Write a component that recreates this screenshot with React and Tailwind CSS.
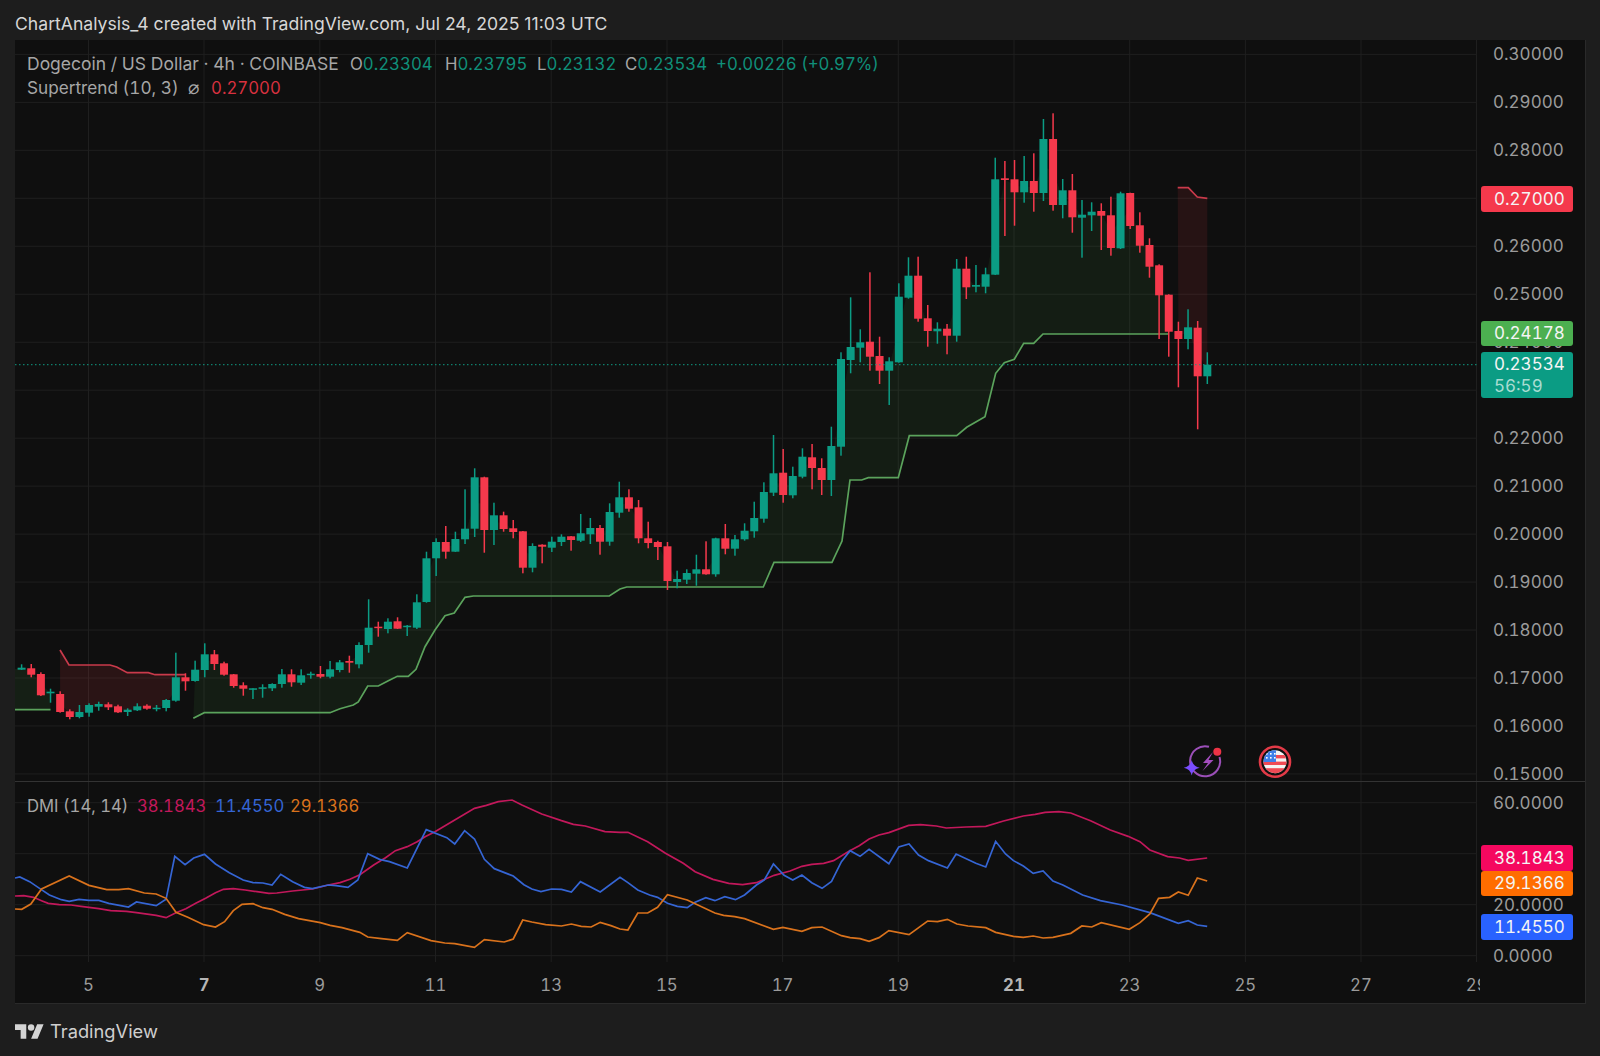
import React from 'react';

// candle rows: wick top, body top, body bottom, wick bottom, 1 = up / 0 = down
const candles = [
  [664.3, 667.7, 669.7, 670, 1], [664, 668.3, 674.7, 677.3, 0], [672.3, 674, 695.3, 696, 0], [688.7, 691.7, 693.3, 702.7, 1],
  [691.3, 694, 712, 712.7, 0], [709.3, 711.3, 717, 719.3, 0], [705, 712, 717, 718.3, 1], [703.3, 705, 712.7, 716.7, 1],
  [701.7, 704, 706.7, 710.7, 1], [702.3, 704.3, 707.3, 710, 0], [704.7, 706.3, 712.3, 713, 0], [708.3, 709.7, 712, 716, 1],
  [703.3, 706.3, 710.3, 711, 1], [704.3, 705.7, 708.7, 709.7, 0], [705, 707.7, 708.7, 711.3, 1], [699, 700, 708, 711.3, 1],
  [652.7, 677.3, 700.7, 701.7, 1], [673.3, 677.3, 681.3, 690.7, 0], [660.7, 669.7, 681, 681.7, 1], [643.3, 654.3, 670, 677.3, 1],
  [650, 654.3, 664, 670, 0], [661.7, 663.3, 674.7, 675.7, 0], [674, 674.3, 686, 687.7, 0], [682.3, 685.3, 688.7, 695.7, 0],
  [688.3, 688.3, 689, 699, 1], [684.3, 687.3, 688.3, 697.7, 1], [683.3, 684, 688.3, 691, 1], [669, 674.3, 684, 687.7, 1],
  [669.3, 674.3, 682.3, 686.7, 0], [669.3, 675.3, 682.7, 685, 1], [671.7, 673.7, 675, 678.7, 1], [666, 674, 676.7, 678.3, 0],
  [661, 669.3, 676.7, 678.3, 1], [660, 662.3, 670, 672.3, 1], [655.7, 661, 662.7, 672.7, 0], [642.3, 645, 664.3, 668.3, 1],
  [599.3, 627.7, 645, 652.7, 1], [621.7, 626.7, 628, 636.7, 0], [618.3, 621.7, 629, 633.3, 1], [617.3, 621.3, 628.7, 629, 0],
  [625, 625.7, 626.7, 636, 1], [594.3, 602.3, 627.7, 629, 1], [551.7, 558.3, 602, 602.7, 1], [538.3, 542, 558.3, 576, 1],
  [526, 542, 551.7, 558.7, 0], [531.7, 539, 551.7, 552, 1], [489.3, 528.7, 539.3, 544, 1], [468.3, 477.3, 528.7, 537, 1],
  [476.7, 477.3, 530, 552.7, 0], [502.7, 515.3, 530, 545, 1], [511.7, 515.3, 529, 531.7, 0], [520, 528.3, 532, 538.3, 0],
  [531, 531.3, 567.7, 573.3, 0], [543.3, 546, 567.7, 572.3, 1], [544.3, 544.7, 546.7, 563.3, 0], [536.7, 541.7, 547.7, 552, 1],
  [534.3, 536.7, 542, 546, 1], [536, 536.3, 540, 550.7, 0], [514, 533.3, 540.7, 542, 1], [518, 528, 534.3, 544, 1],
  [525, 528, 541.7, 554.7, 0], [503.3, 512, 541.7, 545.7, 1], [481.7, 497.3, 512.7, 517.7, 1], [489.3, 497.3, 508.7, 511.7, 0],
  [500, 507.3, 538.3, 543.3, 0], [521.7, 538.3, 543, 548.3, 0], [540.7, 542, 547, 560, 0], [542, 546.3, 581, 590, 0],
  [570.7, 579, 582, 588.3, 1], [569.3, 573, 579.7, 584, 1], [554.7, 569.3, 573.7, 585.7, 1], [541.3, 569.3, 574.3, 574.7, 0],
  [537.7, 538.3, 574.3, 576.7, 1], [524, 538.3, 548.7, 554.3, 0], [535, 539.3, 548.7, 555.7, 1], [523.3, 530.7, 539.3, 540.7, 1],
  [501.7, 518, 531.3, 537.7, 1], [482.3, 492, 518.7, 522.7, 1], [435, 473.3, 492.7, 496, 1], [449, 472.7, 495, 502.7, 0],
  [466.7, 476, 495.3, 498.3, 1], [448.3, 456.7, 476.7, 478.3, 1], [444, 457.3, 468, 489.3, 0], [458.3, 468, 480, 495, 0],
  [426.7, 446, 480, 496, 1], [352.3, 359, 446.7, 455.7, 1], [297.3, 347, 360, 373.3, 1], [329.3, 342.3, 347.7, 362.3, 1],
  [272.3, 341.7, 356.7, 370.7, 0], [336.7, 356, 370.7, 384, 0], [357.3, 361.3, 370.7, 405, 1], [283.3, 296.7, 362.3, 362.7, 1],
  [257.3, 275.7, 297.7, 298.7, 1], [256.7, 275.7, 318.7, 321.7, 0], [305, 318.3, 331, 346.7, 0], [322.3, 328.7, 331.3, 343.7, 1],
  [324, 328.7, 335.7, 354.3, 0], [259, 268.7, 335.7, 341.7, 1], [256.7, 268.7, 287.3, 299, 0], [265, 285, 286.7, 292.3, 1],
  [267.7, 274.3, 286.7, 293.3, 1], [157.7, 179.3, 274.7, 275, 1], [161, 178.3, 180, 236, 0], [160, 179.3, 192.3, 225.7, 0],
  [156, 181, 192.3, 202.7, 1], [153.3, 181, 193, 211.7, 0], [119, 139, 193, 201, 1], [113.3, 139, 205, 210.7, 0],
  [179, 190.3, 205, 218.3, 1], [174, 190.3, 217.3, 232.7, 0], [200, 214.7, 217.7, 257.7, 1], [202.3, 211.7, 215.3, 231, 1],
  [203.3, 211, 215.7, 250, 0], [196.7, 215.3, 248, 255.7, 0], [191.7, 193.3, 248.3, 249, 1], [192.7, 193, 226, 229, 0],
  [212.3, 225.3, 245.7, 252.7, 0], [238.3, 245, 266.7, 277.7, 0], [264.3, 265.3, 295.3, 339, 0], [294.3, 294.7, 331.7, 356.7, 0],
  [321.7, 331, 339, 387.3, 0], [309.3, 327.3, 339, 349.3, 1], [321, 327.7, 376.3, 429.3, 0], [352.3, 364.7, 376.3, 384, 1],
];

const candleX = (i) => 21.6 + i * 9.64;

// supertrend runs, with the candle range each one shades
const greenA = [[15, 709.7], [50.5, 709.7]];
const greenB = [
  [193.3, 718.3], [204.3, 712.7], [330, 712.7], [340, 708.7], [353.3, 705], [358.3, 702], [367.7, 686], [378.3, 686],
  [388.3, 680.7], [397.3, 676.3], [408.3, 676.3], [416, 669.3], [425, 646.7], [435, 630], [445, 615.7], [454.3, 613],
  [465, 597.3], [473.3, 596], [609.3, 596], [620, 589], [626.7, 587], [763.3, 587], [774, 562.3], [832, 562.3],
  [842, 541], [850, 480], [861.7, 480], [868.3, 477.7], [898.3, 477.7], [909.3, 435.7], [956.7, 435.7], [966.7, 427.3],
  [985, 416.7], [995.7, 373.3], [1004.3, 362.7], [1014.3, 359.3], [1023.7, 343.3], [1033.7, 343.3], [1043, 334], [1168.3, 334],
];
const redA = [[60, 650], [69, 665], [110, 665], [116.7, 667], [127.3, 672.7], [148.3, 672.7], [155, 674.7], [185.5, 674.7]];
const redB = [[1177.7, 187.7], [1188.3, 187.7], [1197.3, 197], [1207.3, 198.3]];

const toPoints = (pts) => pts.map((p) => p.join(',')).join(' ');

const shade = (line, from, to) => {
  const mids = [];
  for (let i = to; i >= from; i--) mids.push([candleX(i), (candles[i][1] + candles[i][2]) / 2]);
  return toPoints([...line, ...mids]);
};

// DMI lines, two stretches of the pane joined at x = 620
const dmiPts = (left, right) => [
  ...left.map(([x, y]) => [x / 2.529, 790 + y / 3]),
  ...right.map(([x, y]) => [620 + x / 2.529, 790 + y / 3]),
];

const pinkLine = dmiPts(
  [[38,318],[60,317],[85,322],[105,332],[122,340],[150,344],[180,345],[205,349],[250,356],[280,362],[320,364],[345,368],[395,376],[420,383],[445,368],[470,356],[495,340],[520,325],[545,308],[565,298],[590,296],[620,300],[650,305],[680,310],[700,309],[740,303],[790,297],[830,285],[860,278],[885,268],[910,254],[945,225],[975,203],[1000,182],[1030,170],[1055,155],[1075,140],[1100,125],[1150,90],[1200,55],[1230,46],[1260,35],[1295,30],[1320,45],[1370,72],[1420,92],[1450,103],[1480,108],[1530,125],[1568,127]],
  [[20,127],[70,155],[115,190],[160,220],[190,245],[235,268],[275,280],[310,284],[345,278],[390,256],[430,243],[460,229],[485,223],[515,220],[540,212],[580,183],[605,167],[630,147],[655,135],[680,128],[730,106],[760,104],[800,108],[825,114],[875,111],[925,109],[970,93],[1020,78],[1050,73],[1075,67],[1110,65],[1140,69],[1190,92],[1240,120],[1285,139],[1315,155],[1340,180],[1385,200],[1415,204],[1437,211],[1485,204]]
);
const blueLine = dmiPts(
  [[38,264],[50,261],[75,275],[100,295],[125,315],[155,329],[175,334],[200,328],[225,331],[250,331],[275,340],[325,351],[345,336],[395,347],[420,328],[442,199],[468,224],[490,204],[517,193],[545,222],[580,248],[615,270],[640,278],[665,279],[688,285],[710,253],[740,275],[770,292],[790,296],[830,285],[850,287],[880,292],[905,270],[930,191],[960,208],[985,215],[1030,234],[1078,119],[1130,143],[1150,162],[1175,122],[1200,147],[1225,208],[1250,236],[1298,258],[1325,284],[1345,297],[1368,305],[1395,297],[1420,298],[1445,306],[1468,275],[1518,306],[1568,262]],
  [[20,278],[45,300],[75,315],[95,322],[120,340],[145,349],[170,353],[190,337],[217,323],[240,332],[265,320],[292,329],[315,315],[345,285],[365,270],[388,222],[415,256],[437,270],[460,255],[485,278],[511,295],[535,274],[560,215],[582,182],[607,199],[630,178],[680,221],[705,171],[731,162],[755,195],[780,212],[828,234],[850,192],[900,220],[925,231],[950,154],[975,192],[995,212],[1020,228],[1045,250],[1070,243],[1095,273],[1120,285],[1170,315],[1215,332],[1270,345],[1340,368],[1412,400],[1437,392],[1460,405],[1485,409]]
);
const orangeLine = dmiPts(
  [[38,357],[55,358],[78,342],[105,297],[175,258],[225,286],[270,299],[300,299],[325,296],[365,309],[395,312],[420,325],[445,367],[475,382],[515,404],[545,411],[568,395],[590,362],[612,343],[640,341],[665,353],[688,358],[720,373],[755,386],[810,398],[835,406],[865,413],[910,427],[930,441],[965,446],[1005,451],[1030,428],[1090,452],[1125,459],[1150,461],[1200,472],[1225,449],[1275,456],[1298,447],[1322,390],[1345,396],[1380,404],[1420,408],[1445,402],[1470,409],[1495,411],[1518,397],[1545,407],[1568,417]],
  [[20,420],[45,369],[70,369],[95,352],[120,314],[170,330],[240,369],[262,376],[290,380],[315,386],[388,418],[412,412],[460,424],[485,413],[511,411],[560,437],[582,443],[607,446],[630,454],[655,443],[680,422],[731,434],[778,393],[803,395],[828,388],[852,402],[880,408],[925,413],[950,427],[995,439],[1020,442],[1045,438],[1070,444],[1095,442],[1140,430],[1168,408],[1193,411],[1217,398],[1288,418],[1315,398],[1340,372],[1362,325],[1390,322],[1412,306],[1437,316],[1460,264],[1485,273]]
);

const vGrid = [88.5, 204, 319.8, 435.5, 551.2, 667, 782.6, 898.3, 1014, 1129.7, 1245.4, 1361];
const priceTicks = ['0.30000', '0.29000', '0.28000', '0.27000', '0.26000', '0.25000', '0.24000', '0.23000', '0.22000', '0.21000', '0.20000', '0.19000', '0.18000', '0.17000', '0.16000', '0.15000'];
const dmiTicks = ['60.0000', '40.0000', '20.0000', '0.0000'];
const dates = ['5', '7', '9', '11', '13', '15', '17', '19', '21', '23', '25', '27', '29'];

const GRID = '#1f1f1f';
const UP = '#0b9c84';
const DOWN = '#f5394c';
const ST_GREEN = '#5ba35c';
const ST_RED = '#c93a4b';

const Candles = () =>
  candles.map((c, i) => {
    const color = c[4] ? UP : DOWN;
    const x = candleX(i);
    return (
      <g key={i} fill={color}>
        <rect x={x - 0.75} y={c[0]} width="1.5" height={c[3] - c[0]} />
        <rect x={x - 4} y={c[1]} width="8" height={Math.max(c[2] - c[1], 1.5)} />
      </g>
    );
  });

const PowerIcon = () => (
  <g>
    <path d="M1219.5 757 A15 15 0 1 1 1209 746.8" fill="none" stroke="#9b4fb8" strokeWidth="2" />
    <path d="M1213 752 L1203 763 L1208 763 L1202.5 771 L1213.5 760 L1208.5 760 Z" fill="#a34dbd" />
    <circle cx="1217.3" cy="751.7" r="4" fill="#ec3345" />
    <path d="M1191.7 760 Q1193 766.5 1199.7 767.7 Q1193 769 1191.7 775.5 Q1190.4 769 1183.7 767.7 Q1190.4 766.5 1191.7 760 Z" fill="#7a4dff" />
  </g>
);

const FlagIcon = () => (
  <g>
    <circle cx="1275" cy="761.7" r="15" fill="#101010" stroke="#e23a47" strokeWidth="2.6" />
    <clipPath id="flagClip">
      <circle cx="1275" cy="761.7" r="11.5" />
    </clipPath>
    <g clipPath="url(#flagClip)">
      <rect x="1263" y="750" width="24" height="24" fill="#f3f3f3" />
      <rect x="1263" y="755" width="24" height="3.4" fill="#ef4a55" />
      <rect x="1263" y="761.6" width="24" height="3.4" fill="#ef4a55" />
      <rect x="1263" y="768.2" width="24" height="6" fill="#ef4a55" />
      <rect x="1263" y="750" width="13" height="12" fill="#3f7fe8" />
      <rect x="1266" y="753" width="1.6" height="1.6" fill="#fff" />
      <rect x="1270" y="753" width="1.6" height="1.6" fill="#fff" />
      <rect x="1266" y="757" width="1.6" height="1.6" fill="#fff" />
      <rect x="1270" y="757" width="1.6" height="1.6" fill="#fff" />
      <rect x="1274" y="753" width="1.6" height="1.6" fill="#fff" />
      <rect x="1274" y="757" width="1.6" height="1.6" fill="#fff" />
    </g>
  </g>
);

const PriceBadge = ({ className, children }) => (
  <div className={`absolute left-[4px] w-[92px] rounded-[3px] pl-[13px] text-[#f4f4f4] ${className}`}>{children}</div>
);

const App = () => {
  return (
    <div className="w-[1600px] h-[1056px] flex flex-col bg-[#1d1d1d] font-['Inter',sans-serif] overflow-hidden">
      <div className="h-[40px] pl-[15px] pt-[14px] text-[17.6px] leading-[19px] text-[#d6d6d6] whitespace-nowrap">
        ChartAnalysis_4 created with TradingView.com, Jul 24, 2025 11:03 UTC
      </div>

      <div className="ml-[15px] w-[1571px] h-[964px] flex flex-col bg-[#0f0f0f] border-r border-b border-[#2a2a2a] tabular-nums">
        {/* main pane */}
        <div className="h-[742px] flex border-b border-[#333333] overflow-hidden">
          <div className="relative w-[1462px] h-[741px] border-r border-[#1f1f1f]">
            <svg viewBox="15 40 1462 741" className="w-[1462px] h-[741px] block">
              {priceTicks.map((t, i) => (
                <line key={t} x1="15" x2="1477" y1={54.4 + i * 47.97} y2={54.4 + i * 47.97} stroke={GRID} />
              ))}
              {vGrid.map((x) => (
                <line key={x} x1={x} x2={x} y1="40" y2="781" stroke={GRID} />
              ))}
              <polygon points={`${shade(greenA, 0, 3)} 15,669`} fill="#4caf50" fillOpacity="0.1" />
              <polygon points={shade(greenB, 18, 119)} fill="#4caf50" fillOpacity="0.09" />
              <polygon points={shade(redA, 4, 17)} fill="#f23645" fillOpacity="0.12" />
              <polygon points={shade(redB, 120, 123)} fill="#f23645" fillOpacity="0.1" />
              <polyline points={toPoints(greenA)} fill="none" stroke={ST_GREEN} strokeWidth="1.7" />
              <polyline points={toPoints(greenB)} fill="none" stroke={ST_GREEN} strokeWidth="1.7" />
              <polyline points={toPoints(redA)} fill="none" stroke={ST_RED} strokeWidth="1.7" />
              <polyline points={toPoints(redB)} fill="none" stroke={ST_RED} strokeWidth="1.7" />
              <Candles />
              <line x1="15" x2="1477" y1="364.7" y2="364.7" stroke="#0f9c84" strokeWidth="1" strokeDasharray="1.5 2.5" />
              <PowerIcon />
              <FlagIcon />
            </svg>

            <div className="absolute left-[12px] top-[12px] text-[16.8px] leading-[24px] text-[#a6a6a6] whitespace-nowrap">
              <div className="flex">
                <span className="w-[323px] text-[17.5px]">Dogecoin / US Dollar · 4h · COINBASE</span>
                <span className="w-[95px]">O<span className="text-[#0f8f7a]">0.23304</span></span>
                <span className="w-[92px]">H<span className="text-[#0f8f7a]">0.23795</span></span>
                <span className="w-[88px]">L<span className="text-[#0f8f7a]">0.23132</span></span>
                <span className="w-[91px]">C<span className="text-[#0f8f7a]">0.23534</span></span>
                <span className="text-[#0f8f7a]">+0.00226 (+0.97%)</span>
              </div>
              <div className="flex items-center">
                <span className="w-[161px] text-[17.2px]">Supertrend (10, 3)</span>
                <span className="w-[23px] text-[19px]">⌀</span>
                <span className="text-[#d8313f]">0.27000</span>
              </div>
            </div>
          </div>

          <div className="relative flex-1 flex flex-col gap-[27.97px] pt-[4.4px] pl-[16px] text-[17px] leading-[20px] text-[#9b9b9b]">
            {priceTicks.map((t) => (
              <div key={t} className="h-[20px] shrink-0">{t}</div>
            ))}
            <PriceBadge className="top-[146px] h-[26px] leading-[26px] bg-[#f5394c]">0.27000</PriceBadge>
            <PriceBadge className="top-[281px] h-[25px] leading-[25px] bg-[#4caf50]">0.24178</PriceBadge>
            <PriceBadge className="top-[312px] h-[46px] pt-[1px] leading-[22px] bg-[#0b9c84]">
              <div>0.23534</div>
              <div className="text-[#a9dcd2]">56:59</div>
            </PriceBadge>
          </div>
        </div>

        {/* DMI pane */}
        <div className="h-[180px] flex">
          <div className="relative w-[1462px] h-[180px] border-r border-[#1f1f1f]">
            <svg viewBox="15 782 1462 180" className="w-[1462px] h-[180px] block">
              {[802.7, 853.7, 904.7, 955.7].map((y) => (
                <line key={y} x1="15" x2="1477" y1={y} y2={y} stroke={GRID} />
              ))}
              {vGrid.map((x) => (
                <line key={x} x1={x} x2={x} y1="782" y2="962" stroke={GRID} />
              ))}
              <polyline points={toPoints(pinkLine)} fill="none" stroke="#c2185b" strokeWidth="1.7" />
              <polyline points={toPoints(blueLine)} fill="none" stroke="#3565d4" strokeWidth="1.7" />
              <polyline points={toPoints(orangeLine)} fill="none" stroke="#d9721c" strokeWidth="1.7" />
            </svg>
            <div className="absolute left-[12px] top-[13px] flex text-[16.7px] leading-[22px] whitespace-nowrap">
              <span className="w-[110px] text-[#a6a6a6]">DMI (14, 14)</span>
              <span className="w-[78px] text-[#c2185b]">38.1843</span>
              <span className="w-[75px] text-[#3565d4]">11.4550</span>
              <span className="text-[#d9721c]">29.1366</span>
            </div>
          </div>

          <div className="relative flex-1 flex flex-col gap-[31px] pt-[10.7px] pl-[16px] text-[17px] leading-[20px] text-[#9b9b9b]">
            {dmiTicks.map((t) => (
              <div key={t} className="h-[20px] shrink-0">{t}</div>
            ))}
            <PriceBadge className="top-[63px] h-[26px] leading-[26px] bg-[#f5085f]">38.1843</PriceBadge>
            <PriceBadge className="top-[89px] h-[25px] leading-[25px] bg-[#ff6d00]">29.1366</PriceBadge>
            <PriceBadge className="top-[132px] h-[26px] leading-[26px] bg-[#2962ff]">11.4550</PriceBadge>
          </div>
        </div>

        {/* time axis */}
        <div className="h-[40px] flex">
          <div className="w-[1465px] overflow-hidden flex pl-[15.6px] pt-[12px] text-[16.8px] leading-[22px] text-[#9b9b9b]">
            {dates.map((d) => (
              <div key={d} className={`w-[115.7px] shrink-0 text-center ${d === '7' || d === '21' ? 'font-bold text-[#b5b5b5]' : ''}`}>
                {d}
              </div>
            ))}
          </div>
        </div>
      </div>

      <div className="flex items-center gap-[6px] pl-[15px] pt-[15px]">
        <svg viewBox="0 0 36 18" className="w-[29px] h-[15px]">
          <path d="M14 18H7V7H0V0h14v18zM28 18h-8l7.5-18h8L28 18z" fill="#d4d4d4" />
          <circle cx="20" cy="4" r="4" fill="#d4d4d4" />
        </svg>
        <span className="text-[18.3px] leading-[24px] text-[#cfcfcf]">TradingView</span>
      </div>
    </div>
  );
};

export default App;
